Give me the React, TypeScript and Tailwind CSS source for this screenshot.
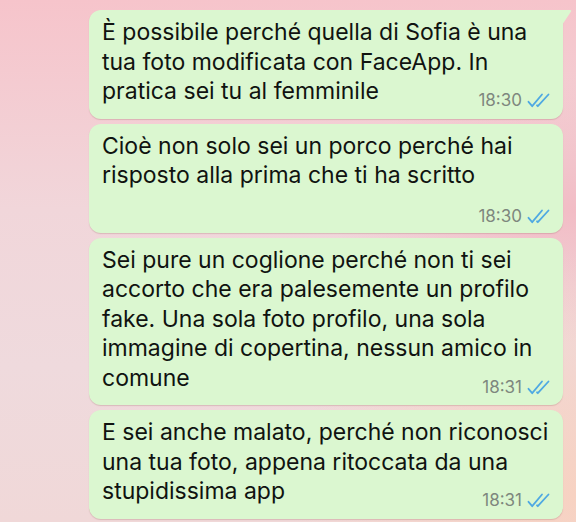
const bubbles = [
  {
    lines: [
      "È possibile perché quella di Sofia è una",
      "tua foto modificata con FaceApp. In",
      "pratica sei tu al femminile",
    ],
    time: "18:30",
    tail: true,
    ownRow: false,
  },
  {
    lines: ["Cioè non solo sei un porco perché hai", "risposto alla prima che ti ha scritto"],
    time: "18:30",
    tail: false,
    ownRow: true,
  },
  {
    lines: [
      "Sei pure un coglione perché non ti sei",
      "accorto che era palesemente un profilo",
      "fake. Una sola foto profilo, una sola",
      "immagine di copertina, nessun amico in",
      "comune",
    ],
    time: "18:31",
    tail: false,
    ownRow: false,
  },
  {
    lines: [
      "E sei anche malato, perché non riconosci",
      "una tua foto, appena ritoccata da una",
      "stupidissima app",
    ],
    time: "18:31",
    tail: false,
    ownRow: false,
  },
];

const ReadTicks = () => (
  <svg width="25" height="15" viewBox="0 0 25 15" fill="none" className="shrink-0">
    <path d="M1.5 8.8 L5.2 13.2 L15 1.5" stroke="#4fa9e2" strokeWidth="1.8" strokeLinecap="round" strokeLinejoin="round" />
    <path d="M10 12.3 L10.8 13.2 L21.5 1.5" stroke="#4fa9e2" strokeWidth="1.8" strokeLinecap="round" strokeLinejoin="round" />
  </svg>
);

const Stamp = ({ time }: { time: string }) => (
  <span className="flex items-center gap-[5px] text-[17px] leading-[17px] text-[#7e877e] whitespace-nowrap">
    {time}
    <ReadTicks />
  </span>
);

const App = () => {
  return (
    <div
      className="w-[576px] h-[522px] overflow-hidden bg-[radial-gradient(ellipse_at_100%_95%,#f7d2c2_0%,transparent_35%),radial-gradient(ellipse_at_100%_40%,#f2bcc5_0%,transparent_30%),linear-gradient(180deg,#f6c4cb_0%,#f1d6da_40%,#efdadd_70%,#f0d8d8_100%)] font-['Inter','Liberation_Sans',sans-serif] text-[#101310]"
    >
      <div className="flex flex-col gap-[5px] pt-[10px] pl-[89px] w-[563px]">
        {bubbles.map((b, i) => {
          const body = b.ownRow ? b.lines : b.lines.slice(0, -1);
          const last = b.lines[b.lines.length - 1];
          return (
            <div
              key={i}
              className={`relative bg-[#dbf7d0] pl-[13px] pr-[11px] pt-[8px] shadow-[0_1px_1px_rgba(150,90,90,0.25)] ${
                b.tail ? "rounded-[12px] rounded-tr-none" : "rounded-[12px]"
              } ${b.ownRow ? "pb-[8px]" : "pb-[12px]"}`}
            >
              {b.tail && (
                <svg
                  width="10"
                  height="16"
                  viewBox="0 0 10 16"
                  className="absolute -right-[9px] top-0"
                >
                  <path d="M0 0 H8 Q10 0 9 1.5 L0 15 Z" fill="#dbf7d0" />
                </svg>
              )}
              <div className="text-[23px] leading-[29.5px] whitespace-nowrap">
                {body.map((l, j) => (
                  <div key={j}>{l}</div>
                ))}
                {!b.ownRow && (
                  <div className="flex items-baseline justify-between">
                    <span>{last}</span>
                    <span className="translate-y-[7px]">
                      <Stamp time={b.time} />
                    </span>
                  </div>
                )}
              </div>
              {b.ownRow && (
                <div className="flex h-[34px] items-end justify-end">
                  <Stamp time={b.time} />
                </div>
              )}
            </div>
          );
        })}
      </div>
    </div>
  );
};

export default App;
